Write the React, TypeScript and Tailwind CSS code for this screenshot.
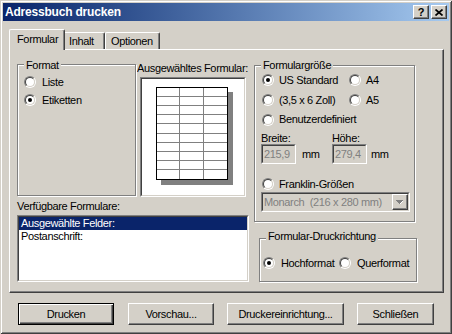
import React from 'react';

// classic Win2000 look: face #d4d0c8, shadow #808080, dark #404040
const raised =
  'border border-t-white border-l-white border-r-[#404040] border-b-[#404040] shadow-[inset_-1px_-1px_0_#808080]';

function Radio({ checked = false }: { checked?: boolean }) {
  return (
    <span className="relative inline-block w-[12px] h-[12px] shrink-0 rounded-full border border-t-[#808080] border-l-[#808080] border-r-white border-b-white">
      <span className="absolute inset-0 flex items-center justify-center rounded-full border border-t-[#404040] border-l-[#404040] border-r-[#d4d0c8] border-b-[#d4d0c8] bg-white">
        {checked && <span className="w-[4px] h-[4px] rounded-full bg-black" />}
      </span>
    </span>
  );
}

function Option({ label, checked, gap = 'ml-[5px]', className = '' }: { label: string; checked?: boolean; gap?: string; className?: string }) {
  return (
    <div className={`flex items-center ${className}`}>
      <Radio checked={checked} />
      <span className={`${gap} whitespace-nowrap`}>{label}</span>
    </div>
  );
}

function GroupBox({ label, className = '', labelTop = 'top-[-7px]', children }: { label: string; className?: string; labelTop?: string; children?: React.ReactNode }) {
  return (
    <div className={`relative shrink-0 border border-[#808080] shadow-[inset_1px_1px_0_#fff,1px_1px_0_#fff] ${className}`}>
      <span className={`absolute left-[6px] ${labelTop} bg-[#d4d0c8] px-[2px] whitespace-nowrap`}>{label}</span>
      {children}
    </div>
  );
}

function Sunken({ className = '', inner = 'bg-white', children }: { className?: string; inner?: string; children?: React.ReactNode }) {
  return (
    <div className={`shrink-0 border border-t-[#808080] border-l-[#808080] border-r-white border-b-white ${className}`}>
      <div className={`h-full w-full border border-t-[#404040] border-l-[#404040] border-r-[#d4d0c8] border-b-[#d4d0c8] ${inner}`}>
        {children}
      </div>
    </div>
  );
}

function Button({ label, width, isDefault = false, className = '' }: { label: string; width: string; isDefault?: boolean; className?: string }) {
  if (isDefault) {
    return (
      <button className={`h-[22px] ${width} border border-black shadow-[inset_1px_1px_0_#fff,inset_-1px_-1px_0_#404040,inset_-2px_-2px_0_#808080] bg-[#d4d0c8] ${className}`}>
        {label}
      </button>
    );
  }
  return (
    <button className={`h-[22px] ${width} bg-[#d4d0c8] ${raised} ${className}`}>{label}</button>
  );
}

function LabelPreview() {
  const rows = [9, 18, 27, 36, 46, 55, 64, 73, 82];
  return (
    <svg width="78" height="98" viewBox="0 0 78 98" className="ml-[14px] mt-[8px]" shapeRendering="crispEdges">
      <rect x="5" y="5" width="72" height="93" fill="#808080" />
      <rect x="0.5" y="0.5" width="71" height="92" fill="#fff" stroke="#000" />
      <line x1="23.5" y1="1" x2="23.5" y2="92" stroke="#808080" />
      <line x1="47.5" y1="1" x2="47.5" y2="92" stroke="#808080" />
      {rows.map(r => (
        <line key={r} x1="1" y1={r + 0.5} x2="71" y2={r + 0.5} stroke="#808080" />
      ))}
    </svg>
  );
}

export default function App() {
  return (
    <div className="w-[452px] h-[334px] overflow-hidden bg-[#d4d0c8] p-[3px] flex flex-col shadow-[inset_1px_1px_0_#d4d0c8,inset_-1px_-1px_0_#404040,inset_2px_2px_0_#fff,inset_-2px_-2px_0_#808080] font-['Liberation_Sans',Arial,sans-serif] text-[11px] leading-[13px] tracking-[-0.35px] text-black">
      {/* Title bar */}
      <div className="h-[18px] shrink-0 flex items-center bg-linear-to-r from-[#0a246a] to-[#a6caf0] pl-[2px] pr-[2px]">
        <span className="text-white font-bold text-[12px] tracking-[-0.2px]">Adressbuch drucken</span>
        <div className="ml-auto flex gap-[2px]">
          <div className={`w-[16px] h-[14px] bg-[#d4d0c8] ${raised} flex items-center justify-center font-bold text-[11px] leading-[11px]`}>?</div>
          <div className={`w-[16px] h-[14px] bg-[#d4d0c8] ${raised} flex items-center justify-center`}>
            <svg width="8" height="7" viewBox="0 0 8 7">
              <path d="M0.5 0.5 L7.5 6.5 M7.5 0.5 L0.5 6.5" stroke="#000" strokeWidth="1.7" />
            </svg>
          </div>
        </div>
      </div>

      {/* Tabs */}
      <div className="mt-[8px] ml-[6px] h-[20px] flex items-end">
        <div className="relative z-10 -mb-px h-[21px] w-[56px] bg-[#d4d0c8] border-l border-t border-white border-r border-r-[#404040] shadow-[inset_-1px_0_0_#808080] rounded-t-[2px] pl-[7px] pt-[3px]">
          Formular
        </div>
        <div className="h-[17px] w-[40px] border-t border-white border-r border-r-[#404040] shadow-[inset_-1px_0_0_#808080] rounded-tr-[2px] pl-[4px] pt-[2px]">
          Inhalt
        </div>
        <div className="h-[17px] w-[55px] border-l border-t border-white border-r border-r-[#404040] shadow-[inset_-1px_0_0_#808080] rounded-t-[2px] pl-[5px] pt-[2px]">
          Optionen
        </div>
      </div>

      {/* Tab panel */}
      <div className="ml-[6px] w-[435px] h-[244px] shrink-0 flex pl-[7px] pt-[14px] border border-t-white border-l-white border-r-[#404040] border-b-[#404040] shadow-[inset_-1px_-1px_0_#808080]">
        {/* Left column */}
        <div className="w-[232px] flex flex-col">
          <div className="flex items-start">
            <GroupBox label="Format" className="w-[119px] h-[132px] pt-[8px] pl-[6px]" labelTop="top-[-6px]">
              <Option label="Liste" className="h-[18px]" gap="ml-[6px]" />
              <Option label="Etiketten" checked className="h-[18px]" gap="ml-[6px]" />
            </GroupBox>
            <div className="ml-[1px] flex flex-col">
              <span className="-mt-[2px] whitespace-nowrap">Ausgewähltes Formular:</span>
              <Sunken className="ml-[3px] mt-[2px] w-[106px] h-[120px]">
                <LabelPreview />
              </Sunken>
            </div>
          </div>
          <span className="mt-[3px]">Verfügbare Formulare:</span>
          <Sunken className="mt-[2px] w-[232px] h-[67px]">
            <div className="bg-[#0a246a] text-white h-[13px] pl-[2px]">Ausgewählte Felder:</div>
            <div className="h-[13px] pl-[2px]">Postanschrift:</div>
          </Sunken>
        </div>

        {/* Right column */}
        <div className="ml-[5px] mt-[1px] flex flex-col">
          <GroupBox label="Formulargröße" className="w-[161px] h-[157px] pt-[4px]">
            <div className="pl-[7px] flex h-[20px] items-center">
              <Option label="US Standard" checked className="w-[87px]" />
              <Option label="A4" />
            </div>
            <div className="pl-[7px] flex h-[20px] items-center">
              <Option label="(3,5 x 6 Zoll)" className="w-[87px]" />
              <Option label="A5" />
            </div>
            <div className="pl-[7px] flex h-[19px] items-center">
              <Option label="Benutzerdefiniert" />
            </div>
            <div className="pl-[6px] mt-[4px] flex">
              <div className="w-[71px] flex flex-col">
                <span className="h-[11px] leading-[11px]">Breite:</span>
                <div className="flex items-center">
                  <Sunken className="w-[35px] h-[20px]" inner="bg-[#d4d0c8] text-[#808080] pl-[1px] flex items-center">
                    215,9
                  </Sunken>
                  <span className="ml-[6px]">mm</span>
                </div>
              </div>
              <div className="flex flex-col">
                <span className="h-[11px] leading-[11px]">Höhe:</span>
                <div className="flex items-center">
                  <Sunken className="w-[35px] h-[20px]" inner="bg-[#d4d0c8] text-[#808080] pl-[1px] flex items-center">
                    279,4
                  </Sunken>
                  <span className="ml-[4px]">mm</span>
                </div>
              </div>
            </div>
            <div className="pl-[7px] mt-[12px] flex h-[16px] items-center">
              <Option label="Franklin-Größen" />
            </div>
            <Sunken className="ml-[6px] w-[149px] h-[20px]" inner="bg-[#d4d0c8] text-[#808080] flex items-center pl-[1px] whitespace-pre">
              <span>Monarch  (216 x 280 mm)</span>
              <div className={`ml-auto w-[16px] h-[16px] bg-[#d4d0c8] ${raised} flex items-center justify-center`}>
                <svg width="8" height="5" viewBox="0 0 8 5" shapeRendering="crispEdges">
                  <path d="M1 1h6v1h-1v1h-1v1h-2v-1h-1v-1h-1z" fill="#fff" />
                  <path d="M0 0h7v1h-1v1h-1v1h-1v1h-1v-1h-1v-1h-1v-1h-1z" fill="#808080" />
                </svg>
              </div>
            </Sunken>
          </GroupBox>

          <GroupBox label="Formular-Druckrichtung" className="ml-[5px] mt-[16px] w-[158px] h-[44px] pt-[16px] pl-[3px]" labelTop="top-[-9px]">
            <div className="flex h-[16px] items-center">
              <Option label="Hochformat" checked className="w-[76px]" gap="ml-[6px]" />
              <Option label="Querformat" gap="ml-[6px]" />
            </div>
          </GroupBox>
        </div>
      </div>

      {/* Buttons */}
      <div className="mt-[10px] ml-[15px] flex">
        <Button label="Drucken" width="w-[96px]" isDefault />
        <Button label="Vorschau..." width="w-[86px]" className="ml-[14px]" />
        <Button label="Druckereinrichtung..." width="w-[117px]" className="ml-[13px]" />
        <Button label="Schließen" width="w-[77px]" className="ml-[13px]" />
      </div>
    </div>
  );
}
